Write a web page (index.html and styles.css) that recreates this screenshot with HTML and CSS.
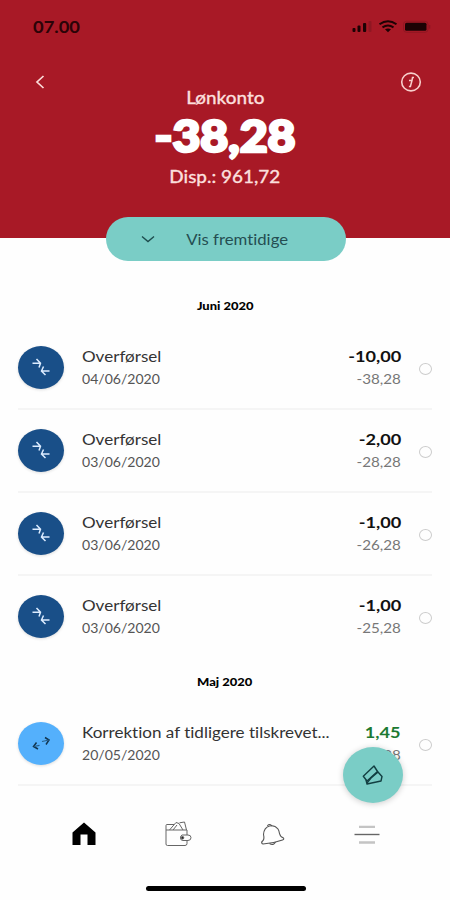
FILE: index.html
```html
<!DOCTYPE html>
<html lang="da">
<head>
    <meta charset="UTF-8">
    <meta name="viewport" content="width=device-width, initial-scale=1.0">
    <title>Lønkonto</title>
    <link rel="stylesheet" href="styles.css">
</head>
<body>
    <svg width="0" height="0" class="defs">
        <symbol id="transfer" viewBox="0 0 46 43">
            <g fill="none" stroke="#dcecff" stroke-width="1.5">
                <path d="M14.500 17.300h7.500M18.500 13l4 4.200-1.500 4.300M31.500 25h-7.500M25.500 20.500l-2 4.500 4 4"/>
            </g>
        </symbol>
        <symbol id="exchange" viewBox="0 0 46 43">
            <g fill="none" stroke="#12354f" stroke-width="1.500">
                <path d="M18.500 20.500l-3 4 4.500 2.500M27 15.500l4 2.500-3 4.500"/>
                <path d="M16 24.500l5.500-1.200M31 18l-7 1.500" stroke="#28608c" stroke-width="1.200"/>
            </g>
        </symbol>
    </svg>

    <header class="header">
        <div class="status">
            <span class="time">07.00</span>
            <svg width="80" height="16" viewBox="0 0 80 16">
                <g fill="#1c0204">
                    <rect x="1.500" y="10" width="3" height="4" rx="1"/>
                    <rect x="6.500" y="7.500" width="3" height="6.500" rx="1"/>
                    <rect x="12" y="5" width="3.200" height="9" rx="1"/>
                    <rect x="17.500" y="3" width="3" height="11" rx="1" fill="#8f1722"/>
                    <path d="M34 11.300q3-1.800 6 0l-3 3z"/>
                    <rect x="54" y="4.800" width="21.500" height="8" rx="1.500"/>
                </g>
                <path d="M28.500 6.300q8.500-6 17 0M31.500 9.300q5.500-3.500 11 0" fill="none" stroke="#1c0204" stroke-width="2"/>
                <rect x="52.500" y="3.300" width="24.500" height="11" rx="3" fill="none" stroke="#8f1722"/>
                <path d="M78.500 7v3.500" stroke="#8f1722" stroke-width="1.500"/>
            </svg>
        </div>
        <div class="topbar">
            <svg width="12" height="16" viewBox="0 0 12 16"><path d="M10.500 2L4 8l6.500 6" fill="none" stroke="#fbdcd8" stroke-width="1.700"/></svg>
            <svg width="22" height="22" viewBox="0 0 22 22">
                <g fill="none" stroke="#f8cfcb" stroke-width="1.600">
                    <ellipse cx="11" cy="11" rx="9.300" ry="8.900"/>
                    <path d="M9 9.500h3l-1.600 6h-1.500M12 9.500l.5-3h1.500" stroke-width="1.500"/>
                </g>
            </svg>
        </div>
        <div class="account"><span>Lønkonto</span></div>
        <div class="balance"><span>-38,28</span></div>
        <div class="available"><span>Disp.: 961,72</span></div>
        <button class="future">
            <svg width="14" height="9" viewBox="0 0 14 9"><path d="M1 1.500l6 5 6-5" fill="none" stroke="#1d4c4d" stroke-width="1.400"/></svg>
            <span>Vis fremtidige</span>
        </button>
    </header>

    <main class="list">
        <h2 class="june"><span>Juni 2020</span></h2>
        <div class="row">
            <svg class="avatar"><use href="#transfer"/></svg>
            <div class="info"><p><span>Overførsel</span></p><small><span>04/06/2020</span></small></div>
            <div class="sum"><b><span>-10,00</span></b><small><span>-38,28</span></small></div>
            <i class="dot"></i>
        </div>
        <div class="row">
            <svg class="avatar"><use href="#transfer"/></svg>
            <div class="info"><p><span>Overførsel</span></p><small><span>03/06/2020</span></small></div>
            <div class="sum"><b><span>-2,00</span></b><small><span>-28,28</span></small></div>
            <i class="dot"></i>
        </div>
        <div class="row">
            <svg class="avatar"><use href="#transfer"/></svg>
            <div class="info"><p><span>Overførsel</span></p><small><span>03/06/2020</span></small></div>
            <div class="sum"><b><span>-1,00</span></b><small><span>-26,28</span></small></div>
            <i class="dot"></i>
        </div>
        <div class="row last">
            <svg class="avatar"><use href="#transfer"/></svg>
            <div class="info"><p><span>Overførsel</span></p><small><span>03/06/2020</span></small></div>
            <div class="sum"><b><span>-1,00</span></b><small><span>-25,28</span></small></div>
            <i class="dot"></i>
        </div>
        <h2 class="may"><span>Maj 2020</span></h2>
        <div class="row">
            <svg class="avatar light"><use href="#exchange"/></svg>
            <div class="info"><p><span>Korrektion af tidligere tilskrevet...</span></p><small><span>20/05/2020</span></small></div>
            <div class="sum"><b class="plus"><span>1,45</span></b><small><span>-24,28</span></small></div>
            <i class="dot"></i>
        </div>
    </main>

    <button class="fab">
        <svg width="24" height="24" viewBox="0 0 24 24">
            <g fill="none" stroke="#123f42" stroke-width="1.400" stroke-linejoin="round">
                <path d="M2.300 13.300L13 3l3.500 5.500L6 18z"/>
                <path d="M5 17l1 4 14-3 1-4.500-4.500-5M6 20l4-5 6.500-5.500"/>
            </g>
        </svg>
    </button>

    <nav class="tabs">
        <svg width="28" height="28" viewBox="0 0 28 28"><path d="M2.500 11.500L14 1.500l11.500 10V24H17.500V13.500h-7V24h-8z"/></svg>
        <svg width="28" height="28" viewBox="0 0 28 28">
            <g fill="none" stroke="#666" stroke-width="1">
                <path d="M2 9v14q0 1.500 1.500 1.500H21q2 0 2-2V19M23 14V9H2M2 9V4.500q0-1 1-1h7M5.500 9L12 1.500l3 1L19 9M13 4l-4 5M15.500 1.800l5-.8 2 8"/>
                <path d="M18 14h6q3 0 3 2.700T24 19.500h-5q-2.500 0-2.500-2.500T18 14z"/>
                <circle cx="18.500" cy="16.800" r="1.300" fill="#222"/>
            </g>
        </svg>
        <svg width="28" height="28" viewBox="0 0 28 28">
            <g fill="none" stroke="#555" stroke-width="1.100">
                <path d="M3 22.500q-1-1.500 1-3 1.500-1.500.5-6Q5 6.500 10.500 5q5-1.200 8.500 3 1 1.500 1.500 4.500.8 3.500 4 4.500.8 1.500-1 2Q14 22.500 4 23z"/>
                <path d="M8.500 5q.5-2 3-1.300l1.500 1.300M10.500 22.500q4 2.500 6-1.500"/>
            </g>
        </svg>
        <svg width="28" height="28" viewBox="0 0 28 28">
            <path d="M6 5.800h16M6 21.500h16" stroke="#c4c4c4" stroke-width="2.300"/>
            <path d="M1.500 13.500h25" stroke="#666" stroke-width="1.400"/>
        </svg>
    </nav>
    <div class="home-bar"></div>
</body>
</html>
```

FILE: styles.css
```css
* {
    box-sizing: border-box;
}
body {
    width: 450px;
    height: 900px;
    margin: 0;
    display: flex;
    flex-direction: column;
    overflow: hidden;
    position: relative;
    font-family: Lato, sans-serif;
    background-color: #fefefe;
}
.defs {
    position: absolute;
}
p, h2 {
    margin: 0;
}
button {
    border: none;
    padding: 0;
    font-family: inherit;
}
/* the type is a little wider than plain Lato */
span {
    display: inline-block;
    white-space: nowrap;
    font-variant-ligatures: none;
    transform: scaleX(1.08);
}
.header {
    height: 238px;
    flex: none;
    display: flex;
    flex-direction: column;
    background-color: #a81926;
    color: #fbdfdc;
    text-align: center;
}
.header > * {
    flex: none;
}
.status {
    height: 52px;
    padding: 0 15px 0 33px;
    display: flex;
    justify-content: space-between;
    align-items: center;
}
.time {
    font-size: 17px;
    font-weight: 700;
    color: #2b0307;
    transform-origin: left;
}
.status svg {
    margin-right: 4px;
}
.topbar {
    height: 32px;
    padding: 28px 28px 0 33px;
    display: flex;
    justify-content: space-between;
    align-items: center;
}
.topbar svg {
    flex: none;
}
.account, .available {
    height: 28px;
    line-height: 27px;
    font-size: 18px;
    font-weight: 500;
    -webkit-text-stroke: 0.3px #fbdfdc;
}
.available {
    line-height: 28px;
}
.account span, .available span {
    transform: scaleX(1.05);
}
.balance {
    height: 50px;
    line-height: 48px;
    font-size: 43px;
    font-weight: 900;
    color: #fff;
    -webkit-text-stroke: 2.6px #fff;
}
.balance span {
    transform: scaleX(1.12);
}
.future {
    width: 240px;
    height: 44px;
    margin: 27px auto 0;
    padding-left: 35px;
    display: flex;
    align-items: center;
    gap: 35px;
    border-radius: 22px;
    background-color: #7acdc6;
    color: #254e52;
    font-size: 15.5px;
    position: relative;
    left: 1px;
}
.list {
    padding: 0 18px;
}
h2 {
    height: 20px;
    line-height: 20px;
    font-size: 12px;
    font-weight: 900;
    text-align: center;
}
.june {
    margin-top: 58px;
    margin-bottom: 11px;
}
.may {
    margin-top: 13px;
    margin-bottom: 11px;
}
.row {
    height: 83px;
    display: flex;
    align-items: center;
    border-bottom: 2px solid #f5f5f5;
}
.last {
    border-bottom-color: transparent;
}
.avatar {
    width: 46px;
    height: 43px;
    flex: none;
    border-radius: 50%;
    background-color: #194f88;
    box-shadow: 0 1px 3px #0002;
}
.light {
    background-color: #54b0fc;
}
.info {
    flex: 1;
    margin-left: 18px;
}
.info span {
    transform-origin: left;
}
.info p {
    height: 23px;
    line-height: 23px;
    font-size: 15.5px;
    color: #333;
}
.info p span {
    transform: scaleX(1.1);
}
small {
    display: block;
    height: 23px;
    line-height: 23px;
    font-size: 13px;
    color: #555;
}
.sum {
    text-align: right;
}
.sum span {
    transform: scaleX(1.17);
    transform-origin: right;
}
.sum b {
    display: block;
    height: 23px;
    line-height: 23px;
    font-size: 15.5px;
    color: #111;
}
.sum .plus {
    color: #1c7a32;
}
.sum small {
    color: #777;
}
.dot {
    width: 13px;
    height: 12px;
    margin: 2px 0 0 18px;
    border: 1px solid #ccc;
    border-radius: 50%;
}
.fab {
    position: absolute;
    left: 343px;
    top: 747px;
    width: 60px;
    height: 56px;
    display: flex;
    align-items: center;
    justify-content: center;
    border-radius: 50%;
    background-color: #7acdc6;
    box-shadow: 0 1px 6px #0003;
}
.tabs {
    margin-top: auto;
    height: 28px;
    padding: 0 69px 0 70px;
    display: flex;
    justify-content: space-between;
}
.home-bar {
    width: 160px;
    height: 5px;
    margin: 37px 144px 9px 146px;
    border-radius: 3px;
    background-color: #000;
}
```
